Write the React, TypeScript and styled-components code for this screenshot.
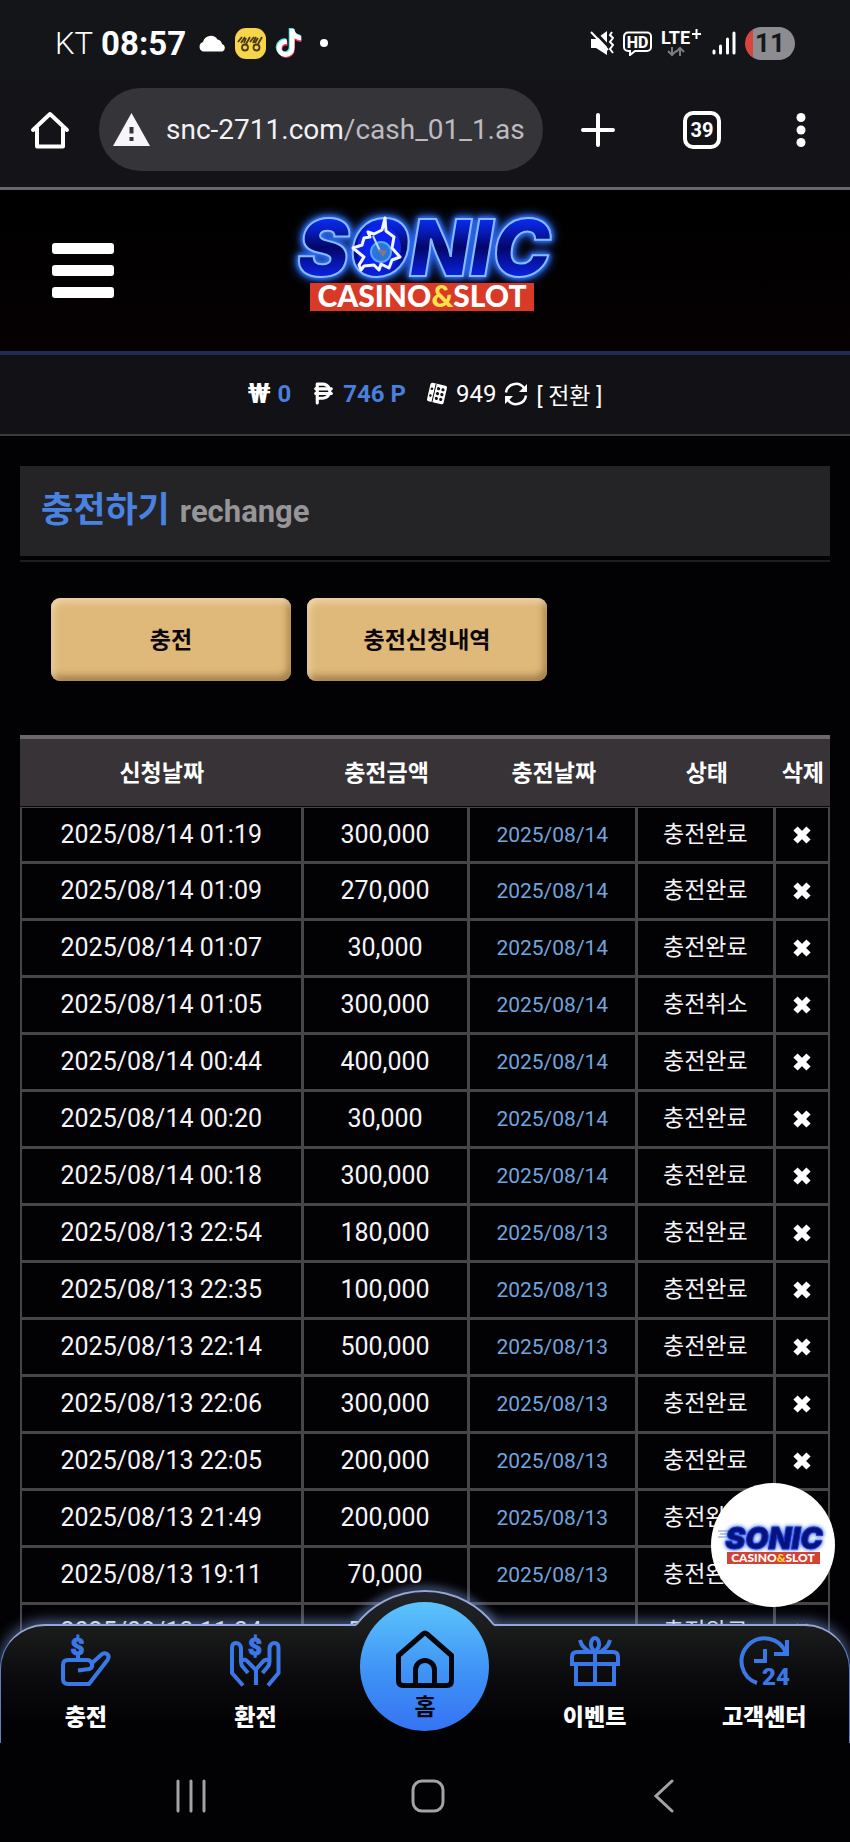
import React from "react";
import styled, { createGlobalStyle, css } from "styled-components";
import { FaPesoSign } from "react-icons/fa6";
import { FaTiktok } from "react-icons/fa";

const sans = `Roboto, "Noto Sans CJK KR", sans-serif`;

const GlobalStyle = createGlobalStyle`
  *, *::before, *::after { box-sizing: border-box; }
  html, body { margin: 0; padding: 0; background: #020104; }
  body { font-family: ${sans}; color: #fff; }
  button { font: inherit; color: inherit; background: none; border: 0; padding: 0; margin: 0; cursor: pointer; }
  a { color: inherit; text-decoration: none; }
  svg { display: block; flex: none; }
`;

const Screen = styled.div`
  display: flex;
  flex-direction: column;
  height: 100vh;
  overflow: hidden;
`;

/* ---------- phone status bar ---------- */

const StatusBar = styled.div`
  display: flex;
  align-items: center;
  justify-content: space-between;
  flex: none;
  height: 86px;
  padding: 0 55px;
  background: #141519;
`;

const StatusGroup = styled.div<{ $gap: number }>`
  display: flex;
  align-items: center;
  gap: ${(p) => p.$gap}px;
`;

const Carrier = styled.span`
  font-size: 31px;
  font-weight: 300;
`;

const Clock = styled.span`
  margin-right: 4px;
  font-size: 33px;
  font-weight: 700;
`;

const MoreDot = styled.span`
  width: 8px;
  height: 8px;
  margin-left: 10px;
  border-radius: 50%;
  background: #fff;
`;

const Battery = styled.span`
  display: flex;
  align-items: center;
  justify-content: center;
  width: 50px;
  height: 33px;
  border-radius: 17px;
  background: linear-gradient(90deg, #d8453c 8px, #8d8d91 8px);
  color: #17181c;
  font-size: 26px;
  font-weight: 700;
`;

/* ---------- browser toolbar ---------- */

const Toolbar = styled.div`
  display: grid;
  grid-template-columns: 99px minmax(0, 1fr) 110px 98px 99px;
  align-items: center;
  justify-items: center;
  flex: none;
  padding: 2px 0 16px;
  border-bottom: 3px solid #69676b;
  background: #141418;
`;

const AddressBar = styled.button`
  display: flex;
  align-items: center;
  gap: 16px;
  width: 100%;
  height: 83px;
  padding: 0 14px;
  border-radius: 42px;
  background: #353439;
`;

const Url = styled.span`
  color: #f3f1f6;
  font-size: 28px;
  white-space: nowrap;
`;

const UrlPath = styled.span`
  color: #bdbbc1;
`;

const TabCount = styled.button`
  display: flex;
  align-items: center;
  justify-content: center;
  width: 38px;
  height: 38px;
  border: 4px solid #fff;
  border-radius: 10px;
  font-size: 20px;
  font-weight: 700;
`;

/* ---------- site ---------- */

const Viewport = styled.div`
  position: relative;
  flex: 1;
  min-height: 0;
  overflow: hidden;
`;

const SiteHeader = styled.header`
  display: grid;
  grid-template-columns: 1fr auto 1fr;
  align-items: center;
  height: 165px;
  padding: 0 52px;
  border-bottom: 4px solid #1f2a55;
  background: linear-gradient(#000, #060103);
`;

const LogoLink = styled.a`
  margin-bottom: 14px;
`;

const Wordmark = styled.text`
  font-family: Inter, sans-serif;
  font-weight: 900;
  font-style: italic;
  text-anchor: middle;
`;

const NeonWordmark = styled(Wordmark)`
  font-size: 78px;
  fill: url(#letters);
  stroke: #86bcff;
  stroke-width: 2px;
  filter: drop-shadow(0 0 2px #2f6bf0) drop-shadow(0 0 2px #2f6bf0) drop-shadow(0 0 5px #2458d8);
`;

const BadgeWordmark = styled(Wordmark)`
  font-size: 30px;
  fill: #07127c;
  stroke: #1734c4;
  stroke-width: 1px;
  filter: drop-shadow(0 0 1px #3f6cf5) drop-shadow(0 0 2px #5f88f8);
`;

const Tagline = styled.text`
  font-family: Lato, sans-serif;
  font-weight: 900;
  fill: #fff;
  text-anchor: middle;
`;

const MenuButton = styled.button`
  display: flex;
  flex-direction: column;
  gap: 11px;
  width: 62px;
`;

const MenuLine = styled.span`
  height: 11px;
  border-radius: 3px;
  background: #fff;
`;

const Balance = styled.div`
  display: flex;
  align-items: center;
  justify-content: center;
  height: 81px;
  padding-bottom: 2px;
  border-bottom: 2px solid #3a393c;
  background: #121115;
  font-size: 24px;
`;

const BalanceItem = styled.span`
  display: flex;
  align-items: center;
  gap: 7px;
  margin-right: 20px;
  font-weight: 700;
`;

const WonSign = styled.span`
  font-size: 28px;
`;

const BalanceValue = styled.span`
  color: #4a7fdc;
`;

const PointSwap = styled.span`
  display: flex;
  align-items: center;
  gap: 8px;
`;

const SwapButton = styled.button`
  font-size: 23px;
`;

const Page = styled.main`
  padding: 30px 20px 0;
`;

const TitleBar = styled.div`
  display: flex;
  align-items: baseline;
  gap: 10px;
  height: 90px;
  padding: 20px 21px 0;
  background: #242326;
`;

const TitleRule = styled.hr`
  height: 2px;
  margin: 4px 0 36px;
  border: 0;
  background: #1d1c1f;
`;

const Title = styled.h1`
  margin: 0;
  color: #4a82e2;
  font-size: 35px;
  line-height: 50px;
  font-weight: 700;
`;

const Subtitle = styled.span`
  color: #969598;
  font-size: 31px;
  font-weight: 700;
`;

const ButtonRow = styled.div`
  display: flex;
  gap: 16px;
  padding: 0 31px;
  margin-bottom: 54px;
`;

const GoldButton = styled.button`
  width: 240px;
  height: 83px;
  padding-bottom: 3px;
  border-radius: 9px;
  background: #deb979;
  box-shadow: inset 3px 4px 7px rgba(255, 228, 205, 0.6), inset -3px -5px 7px rgba(120, 85, 40, 0.6);
  color: #0b0709;
  font-size: 23px;
  font-weight: 700;
`;

const Table = styled.table`
  width: 100%;
  table-layout: fixed;
  border-collapse: separate;
  border-spacing: 0;
`;

const HeadCell = styled.th`
  height: 72px;
  padding: 0 0 4px;
  border-top: 4px solid #6b686c;
  border-bottom: 1px solid #0a080b;
  background: #373337;
  color: #fff;
  font-size: 23px;
  font-weight: 700;
`;

const line = "#474548";

const Cell = styled.td<{ $kind?: "date" | "status" }>`
  height: 57px;
  padding: 0;
  border-right: 3px solid ${line};
  border-bottom: 3px solid ${line};
  color: #f6f4f7;
  font-size: 25px;
  line-height: 50px;
  text-align: center;

  &:first-child { border-left: 2px solid ${line}; }
  &:last-child { border-right-width: 2px; }
  tr:first-child > & { border-top: 1px solid ${line}; }

  ${(p) => p.$kind === "date" && css`color: #70a5dd; font-size: 21px;`}
  ${(p) => p.$kind === "status" && css`font-size: 23px;`}
`;

const DeleteButton = styled.button`
  display: block;
  margin: 0 auto;
`;

/* ---------- floating badge and bottom navigation ---------- */

const FloatingBadge = styled.a`
  position: absolute;
  right: 15px;
  bottom: 136px;
  display: flex;
  align-items: center;
  justify-content: center;
  width: 124px;
  height: 124px;
  border-radius: 50%;
  background: #fff;
`;

const BottomNav = styled.nav`
  position: absolute;
  left: 0;
  right: 0;
  bottom: 0;
  display: grid;
  grid-template-columns: repeat(5, minmax(0, 1fr));
  height: 119px;
  border: 1px solid #5d7ec4;
  border-top: 2px solid #93a6d8;
  border-bottom: 0;
  border-radius: 45px 45px 0 0;
  background: linear-gradient(#1b1c1b, #0b0b0e 45%, #020104 85%);
  box-shadow: 0 -3px 14px rgba(125, 160, 225, 0.6);
`;

const NavBump = styled.svg`
  position: absolute;
  left: 50%;
  top: -54px;
  transform: translateX(-50%);
`;

const NavItem = styled.a`
  display: flex;
  flex-direction: column;
  align-items: center;
  gap: 16px;
  padding-top: 10px;
  font-size: 23px;
  line-height: 32px;
  font-weight: 900;
`;

const HomeItem = styled.a`
  position: relative;
  justify-self: center;
  display: flex;
  flex-direction: column;
  align-items: center;
  gap: 6px;
  width: 129px;
  height: 129px;
  margin-top: -24px;
  padding-top: 28px;
  border-radius: 50%;
  background: linear-gradient(#5bc4fb, #3f92f6 55%, #3573f3);
  color: #05060c;
  font-size: 23px;
  line-height: 28px;
  font-weight: 700;
`;

const SystemBar = styled.div`
  display: grid;
  grid-template-columns: repeat(3, 28%);
  justify-content: center;
  justify-items: center;
  align-items: center;
  flex: none;
  height: 99px;
  padding: 6px 0 0 5px;
  background: #020104;
`;

/* ---------- drawings ---------- */

const Logo = () => (
  <svg width="300" height="110" viewBox="0 0 300 110" overflow="visible" role="img" aria-label="SONIC CASINO&SLOT">
    <defs>
      <linearGradient id="letters" x1="0" y1="0" x2="0" y2="1">
        <stop offset="0.2" stopColor="#0a2cf4" />
        <stop offset="0.5" stopColor="#03066a" />
        <stop offset="0.8" stopColor="#0a22e0" />
      </linearGradient>
    </defs>
    <NeonWordmark x="149" y="67">SONIC</NeonWordmark>
    <ellipse cx="104" cy="39" rx="22" ry="23" fill="#0a24ee" />
    <circle cx="106" cy="43" r="10" fill="#2b74dc" stroke="#58a6f5" strokeWidth="2" />
    <path d="M78 39l9-3 2-7 6-1-2-5 6 2 8-4 3-12 1 13 8 6-2 11 8 9-8 3-3 8-8-4-2 6-5-5-10 1-3 4-2-5 5-8-5-4z" fill="none" stroke="#f2f7ff" strokeWidth="3" strokeLinejoin="round" />
    <path d="M98 27l7 15" stroke="#bcd9ff" strokeWidth="2" />
    <path d="M103 40l5 8 4-6z" fill="#8a7580" />
    <rect x="35" y="74" width="224" height="28" fill="#d93a28" />
    <Tagline x="147" y="98" fontSize="30">
      CASINO<tspan fill="#ffe14a">&amp;</tspan>SLOT
    </Tagline>
  </svg>
);

const BadgeLogo = () => (
  <svg width="110" height="44" viewBox="0 0 110 44" overflow="visible" role="img" aria-label="SONIC CASINO&SLOT">
    <path d="M0 8h16M2 11h12M0 14h12" stroke="#7a8fd8" strokeWidth="1" />
    <BadgeWordmark x="56" y="26">SONIC</BadgeWordmark>
    <rect x="9" y="29" width="93" height="12" fill="#d34334" />
    <Tagline x="55" y="39" fontSize="12">
      CASINO<tspan fill="#ffd93c">&amp;</tspan>SLOT
    </Tagline>
  </svg>
);

const CloudIcon = () => (
  <svg width="29" height="17" viewBox="0 0 29 17" fill="#fff">
    <path d="M5 16.500a5 5 0 0 1 0-9.500A8 8 0 0 1 19.500 4.500 6 6 0 0 1 24 9a4 4 0 0 1 .5 7.500z" />
  </svg>
);

const ScooterIcon = () => (
  <svg width="31" height="31" viewBox="0 0 31 31" fill="none" stroke="#4a3a18" strokeWidth="1.800">
    <rect width="31" height="31" rx="11" fill="#f7d54b" stroke="none" />
    <circle cx="10" cy="19.500" r="3" />
    <circle cx="21.500" cy="19.500" r="3" />
    <path d="M3 14l4-5M6 15l4-6M9 15l2-5M11 16l4-7M15 14l4-5M18 15l3-6M20 15l3-5M23 16l4-7" />
  </svg>
);

const TikTokIcon = () => (
  <svg width="28" height="31" viewBox="0 0 28 31">
    <g><FaTiktok size={28} color="#4fe3dc" /></g>
    <g transform="translate(2 3)"><FaTiktok size={27} color="#ee3458" /></g>
    <g transform="translate(1 1)"><FaTiktok size={28} color="#fff" /></g>
  </svg>
);

const MuteIcon = () => (
  <svg width="24" height="24" viewBox="0 0 24 24">
    <path d="M1 8h5l11-8v24L6 17H1z" fill="#fff" />
    <path d="M3 -1l18 19" stroke="#141519" strokeWidth="3" />
    <path d="M1 1l17 18" stroke="#fff" strokeWidth="2" />
    <path d="M22 1l-2 3 3 3-3 4 3 3-3 4 3 4" fill="none" stroke="#fff" strokeWidth="2" />
  </svg>
);

const HdIcon = () => (
  <svg width="29" height="25" viewBox="0 0 29 25">
    <path d="M5 1.500h19a4 4 0 0 1 4 4V16a4 4 0 0 1-4 4H12l-5 4v-4H5a4 4 0 0 1-4-4V5.500a4 4 0 0 1 4-4z" fill="none" stroke="#fff" strokeWidth="2" />
    <text x="14.500" y="16.500" fontFamily="Roboto, sans-serif" fontSize="16" fontWeight="800" fill="#fff" textAnchor="middle">HD</text>
  </svg>
);

const LteIcon = () => (
  <svg width="42" height="28" viewBox="0 0 42 28" overflow="visible">
    <text x="0" y="15" fontFamily="Roboto, sans-serif" fontSize="18" fontWeight="700" fill="#fff">LTE</text>
    <path d="M31 5h9M35.500 0v10" stroke="#fff" strokeWidth="2" />
    <path d="M11 18v8M7 22l4 4 4-4M19 27v-8M15 23l4-4 4 4" fill="none" stroke="#7c7b80" strokeWidth="2" />
  </svg>
);

const SignalIcon = () => (
  <svg width="24" height="24" viewBox="0 0 24 24" stroke="#fff" strokeWidth="3" strokeLinecap="round">
    <path d="M2 20v2M8.500 15v7M15.500 8v14M22 2v20" />
  </svg>
);

const BrowserHomeIcon = () => (
  <svg width="40" height="40" viewBox="0 0 40 40" fill="none" stroke="#fff" strokeWidth="4" strokeLinejoin="round" strokeLinecap="round">
    <path d="M3 20L20 4l17 16M7 18v18.500h26V18" />
  </svg>
);

const WarningIcon = () => (
  <svg width="37" height="33" viewBox="0 0 37 33">
    <path d="M18.500 0L37 33H0z" fill="#f8f5fa" />
    <path d="M18.500 14v6.500M18.500 24v4" stroke="#353439" strokeWidth="4" />
  </svg>
);

const PlusIcon = () => (
  <svg width="34" height="34" viewBox="0 0 34 34" stroke="#fff" strokeWidth="4" strokeLinecap="round">
    <path d="M2 17h30M17 2v30" />
  </svg>
);

const DotsIcon = () => (
  <svg width="10" height="36" viewBox="0 0 10 36" fill="#fff">
    <circle cx="5" cy="5.500" r="4.500" />
    <circle cx="5" cy="18" r="4.500" />
    <circle cx="5" cy="30.500" r="4.500" />
  </svg>
);

const DiceIcon = () => (
  <svg width="22" height="23" viewBox="0 0 22 23">
    <g transform="rotate(13 11 11.500)">
      <rect x="2.500" y="2" width="17" height="19" rx="2" fill="#fff" />
      <path d="M8 2v19" stroke="#121115" strokeWidth="1" />
      <g fill="#121115">
        <circle cx="11.500" cy="6.500" r="1.600" /><circle cx="11.500" cy="11.500" r="1.600" /><circle cx="11.500" cy="16.500" r="1.600" />
        <circle cx="16" cy="6.500" r="1.600" /><circle cx="16" cy="11.500" r="1.600" /><circle cx="16" cy="16.500" r="1.600" />
        <circle cx="5" cy="8" r="1.300" /><circle cx="5" cy="15" r="1.300" />
      </g>
    </g>
  </svg>
);

const SwapIcon = () => (
  <svg width="24" height="24" viewBox="0 0 24 24">
    <path d="M2 10.500A10 10 0 0 1 20 6M22 13.500A10 10 0 0 1 4 18" fill="none" stroke="#fff" strokeWidth="2.500" />
    <path d="M23 2v8h-8zM1 22v-8h8z" fill="#fff" />
  </svg>
);

const CrossIcon = () => (
  <svg width="18" height="18" viewBox="0 0 18 18" stroke="#fff" strokeWidth="6">
    <path d="M2.500 2.500l13 13M15.500 2.500l-13 13" />
  </svg>
);

const navIcon = { width: 50, height: 50, viewBox: "0 0 50 50", fill: "none", stroke: "#3b78e7", strokeWidth: 4 };

const DepositIcon = () => (
  <svg {...navIcon} overflow="visible">
    <text x="16.500" y="19" fontFamily="Roboto, sans-serif" fontSize="24" fontWeight="900" fill="#3b78e7" stroke="#3b78e7" strokeWidth="1" textAnchor="middle">$</text>
    <path d="M17 19v5" />
    <path d="M17 34.500l11-1.500q4-1 3-5-1-4-5-4H7q-5 0-5 5v14q0 5 5 5h21L46.500 24q2.500-4-.5-6-3-2-6 1l-9 8" strokeLinejoin="round" />
  </svg>
);

const ExchangeIcon = () => (
  <svg {...navIcon} overflow="visible">
    <text x="25" y="19" fontFamily="Roboto, sans-serif" fontSize="24" fontWeight="900" fill="#3b78e7" stroke="#3b78e7" strokeWidth="1" textAnchor="middle">$</text>
    <path d="M13 49.500L2 37V12q0-5 4-5t5 5v14q0 3 2 5l5 6M11 25q4-3 7 1l8 8v15" />
    <path d="M38 49.500L48.500 37V12q0-5-4-5t-5 5v14q0 3-2 5l-5 6M39.500 25q-4-3-7 1l-7 8" />
  </svg>
);

const GiftIcon = () => (
  <svg {...navIcon}>
    <path d="M2 28V21q0-5 5-5h36q5 0 5 5v7zM6 28v20h38V28M25 16v32" />
    <path d="M25 16q-5-5-4-9 1-5 4-5t4 5q1 4-4 9zM10 4q2 8 9 11M40 4q-2 8-9 11" />
  </svg>
);

const SupportIcon = () => (
  <svg {...navIcon} overflow="visible">
    <path d="M18 47A23 23 0 1 1 47 17" />
    <path d="M48 4v14H35M26 13v12H15" />
    <text x="37" y="49" fontFamily="Roboto, sans-serif" fontSize="24" fontWeight="900" fill="#3b78e7" stroke="none" textAnchor="middle">24</text>
  </svg>
);

const HomeIcon = () => (
  <svg width="58" height="58" viewBox="0 0 58 58" fill="none" stroke="#05060c" strokeWidth="5">
    <path d="M2.500 25.500L27 4q2-2 4 0l24.500 21.500V51q0 4.500-4.500 4.500H7q-4.500 0-4.500-4.500zM19.500 55V40a9.500 9.500 0 0 1 19 0v15" strokeLinejoin="round" />
  </svg>
);

const Bump = () => (
  <NavBump width="180" height="56" viewBox="0 0 180 56" fill="none">
    <defs>
      <linearGradient id="bumpFill" x1="0" y1="0" x2="0" y2="1">
        <stop offset="0" stopColor="#20242a" />
        <stop offset="1" stopColor="#1b1c1b" />
      </linearGradient>
      <filter id="bumpGlow" x="-20%" y="-50%" width="140%" height="200%">
        <feGaussianBlur stdDeviation="5" />
      </filter>
    </defs>
    <path d="M22 51A87 87 0 0 1 158 51" stroke="#7da0e1" strokeWidth="6" strokeOpacity="0.7" filter="url(#bumpGlow)" />
    <path d="M21 56V53A87 87 0 0 1 159 53v3z" fill="url(#bumpFill)" />
    <path d="M21 53A87 87 0 0 1 159 53" stroke="#93a6d8" strokeWidth="2" />
  </NavBump>
);

/* ---------- data ---------- */

type Deposit = { requested: string; amount: string; paid: string; status: string };

const deposits: Deposit[] = [
  ["2025/08/14 01:19", "300,000", "충전완료"],
  ["2025/08/14 01:09", "270,000", "충전완료"],
  ["2025/08/14 01:07", "30,000", "충전완료"],
  ["2025/08/14 01:05", "300,000", "충전취소"],
  ["2025/08/14 00:44", "400,000", "충전완료"],
  ["2025/08/14 00:20", "30,000", "충전완료"],
  ["2025/08/14 00:18", "300,000", "충전완료"],
  ["2025/08/13 22:54", "180,000", "충전완료"],
  ["2025/08/13 22:35", "100,000", "충전완료"],
  ["2025/08/13 22:14", "500,000", "충전완료"],
  ["2025/08/13 22:06", "300,000", "충전완료"],
  ["2025/08/13 22:05", "200,000", "충전완료"],
  ["2025/08/13 21:49", "200,000", "충전완료"],
  ["2025/08/13 19:11", "70,000", "충전완료"],
  ["2025/08/13 11:34", "50,000", "충전완료"],
].map(([requested, amount, status]) => ({ requested, amount, status, paid: requested.slice(0, 10) }));

export default function App() {
  return (
    <Screen>
      <GlobalStyle />
      <StatusBar>
        <StatusGroup $gap={8}>
          <Carrier>KT</Carrier>
          <Clock>08:57</Clock>
          <CloudIcon />
          <ScooterIcon />
          <TikTokIcon />
          <MoreDot />
        </StatusGroup>
        <StatusGroup $gap={9}>
          <MuteIcon />
          <HdIcon />
          <LteIcon />
          <SignalIcon />
          <Battery>11</Battery>
        </StatusGroup>
      </StatusBar>

      <Toolbar>
        <button aria-label="Home"><BrowserHomeIcon /></button>
        <AddressBar>
          <WarningIcon />
          <Url>snc-2711.com<UrlPath>/cash_01_1.as</UrlPath></Url>
        </AddressBar>
        <button aria-label="New tab"><PlusIcon /></button>
        <TabCount>39</TabCount>
        <button aria-label="More"><DotsIcon /></button>
      </Toolbar>

      <Viewport>
        <SiteHeader>
          <MenuButton aria-label="Menu"><MenuLine /><MenuLine /><MenuLine /></MenuButton>
          <LogoLink href="#home"><Logo /></LogoLink>
        </SiteHeader>
        <Balance>
          <BalanceItem><WonSign>₩</WonSign><BalanceValue>0</BalanceValue></BalanceItem>
          <BalanceItem><FaPesoSign size={25} /><BalanceValue>746 P</BalanceValue></BalanceItem>
          <PointSwap>
            <DiceIcon />
            949
            <SwapIcon />
            <SwapButton>[ 전환 ]</SwapButton>
          </PointSwap>
        </Balance>

        <Page>
          <TitleBar>
            <Title>충전하기</Title>
            <Subtitle>rechange</Subtitle>
          </TitleBar>
          <TitleRule />
          <ButtonRow>
            <GoldButton>충전</GoldButton>
            <GoldButton>충전신청내역</GoldButton>
          </ButtonRow>
          <Table>
            <colgroup>
              <col width="35%" />
              <col width="20.5%" />
              <col width="20.8%" />
              <col width="17%" />
              <col width="6.7%" />
            </colgroup>
            <thead>
              <tr>
                <HeadCell>신청날짜</HeadCell>
                <HeadCell>충전금액</HeadCell>
                <HeadCell>충전날짜</HeadCell>
                <HeadCell>상태</HeadCell>
                <HeadCell>삭제</HeadCell>
              </tr>
            </thead>
            <tbody>
              {deposits.map((d) => (
                <tr key={d.requested}>
                  <Cell>{d.requested}</Cell>
                  <Cell>{d.amount}</Cell>
                  <Cell $kind="date">{d.paid}</Cell>
                  <Cell $kind="status">{d.status}</Cell>
                  <Cell><DeleteButton aria-label="삭제"><CrossIcon /></DeleteButton></Cell>
                </tr>
              ))}
            </tbody>
          </Table>
        </Page>

        <BottomNav>
          <Bump />
          <NavItem href="#deposit"><DepositIcon />충전</NavItem>
          <NavItem href="#exchange"><ExchangeIcon />환전</NavItem>
          <HomeItem href="#home"><HomeIcon />홈</HomeItem>
          <NavItem href="#event"><GiftIcon />이벤트</NavItem>
          <NavItem href="#support"><SupportIcon />고객센터</NavItem>
        </BottomNav>
        <FloatingBadge href="#sonic"><BadgeLogo /></FloatingBadge>
      </Viewport>

      <SystemBar>
        <button aria-label="Recent apps">
          <svg width="32" height="34" viewBox="0 0 32 34" stroke="#a3a2a5" strokeWidth="3" strokeLinecap="round"><path d="M3 2v30M16 2v30M29 2v30" /></svg>
        </button>
        <button aria-label="Home">
          <svg width="34" height="34" viewBox="0 0 34 34" fill="none" stroke="#a3a2a5" strokeWidth="3"><rect x="2" y="2" width="30" height="30" rx="9" /></svg>
        </button>
        <button aria-label="Back">
          <svg width="20" height="34" viewBox="0 0 20 34" fill="none" stroke="#a3a2a5" strokeWidth="3" strokeLinecap="round"><path d="M18 2L2 17l16 15" /></svg>
        </button>
      </SystemBar>
    </Screen>
  );
}
